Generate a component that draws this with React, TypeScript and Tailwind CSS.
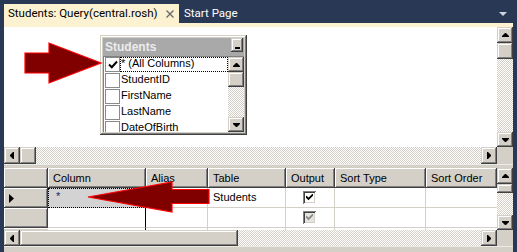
import React from "react";

const raised =
  "bg-[#d4d0c8] shadow-[inset_-1px_-1px_#404040,inset_1px_1px_#d4d0c8,inset_-2px_-2px_#808080,inset_2px_2px_#ffffff]";
const headRaised =
  "bg-[#d4d0c8] shadow-[inset_-1px_-1px_#404040,inset_1px_1px_#ffffff,inset_-2px_-2px_#808080]";
const checker =
  "bg-[image:repeating-conic-gradient(#d4d0c8_0%_25%,#ffffff_0%_50%)] bg-[length:2px_2px]";

type Dir = "up" | "down" | "left" | "right";

function Arrow({ dir }: { dir: Dir }) {
  if (dir === "up")
    return (
      <svg width="7" height="4" viewBox="0 0 7 4">
        <polygon points="3,0 4,0 7,3 7,4 0,4 0,3" fill="#000" />
      </svg>
    );
  if (dir === "down")
    return (
      <svg width="7" height="4" viewBox="0 0 7 4">
        <polygon points="0,0 7,0 7,1 4,4 3,4 0,1" fill="#000" />
      </svg>
    );
  if (dir === "right")
    return (
      <svg width="4" height="7" viewBox="0 0 4 7">
        <polygon points="0,0 1,0 4,3 4,4 1,7 0,7" fill="#000" />
      </svg>
    );
  return (
    <svg width="4" height="7" viewBox="0 0 4 7">
      <polygon points="3,0 4,0 4,7 3,7 0,4 0,3" fill="#000" />
    </svg>
  );
}

function Btn({ dir, cls }: { dir: Dir; cls: string }) {
  return (
    <div className={`${raised} flex items-center justify-center shrink-0 ${cls}`}>
      <Arrow dir={dir} />
    </div>
  );
}

function CheckMark({ color }: { color: string }) {
  return (
    <svg width="7" height="7" viewBox="0 0 7 7">
      <polyline
        points="0.5,3 2.5,5 6.5,1"
        fill="none"
        stroke={color}
        strokeWidth="1.8"
        strokeLinecap="square"
      />
    </svg>
  );
}

function GridCheck({ disabled }: { disabled?: boolean }) {
  return (
    <div
      className={`w-[13px] h-[13px] flex items-center justify-center shadow-[inset_1px_1px_#808080,inset_-1px_-1px_#ffffff,inset_2px_2px_#404040,inset_-2px_-2px_#d4d0c8] ${
        disabled ? "bg-[#e6e4df]" : "bg-white"
      }`}
    >
      <CheckMark color={disabled ? "#8a8a8a" : "#000"} />
    </div>
  );
}

function ListRow({ label, checked, focused }: { label: string; checked?: boolean; focused?: boolean }) {
  return (
    <div className="h-[16px] flex items-start shrink-0">
      <div className="ml-[1px] w-[15px] h-[15px] border border-[#8a8a8a] bg-white flex items-center justify-center shrink-0">
        {checked && (
          <svg width="10" height="9" viewBox="0 0 10 9">
            <polyline points="1,4.5 3.8,7.2 9,1.5" fill="none" stroke="#000" strokeWidth="2" />
          </svg>
        )}
      </div>
      <div
        className={`flex-1 h-[15px] pl-[1px] pt-[1px] leading-[11px] whitespace-nowrap ${
          focused ? "outline outline-1 outline-dotted outline-black -outline-offset-1" : ""
        }`}
      >
        {label}
      </div>
    </div>
  );
}

function StudentsBox() {
  return (
    <div
      className={`absolute left-[96px] top-[8px] w-[147px] h-[100px] p-[3px] flex flex-col ${raised}`}
    >
      <div className="h-[18px] shrink-0 bg-[#a9a9a9] flex items-start pl-[2px]">
        <span className="mt-[2px] font-bold text-[12px] text-[#ececec] leading-[14px]">Students</span>
        <div className={`ml-auto mr-[1px] mt-0 w-[12px] h-[14px] flex items-end justify-center pb-[3px] ${raised}`}>
          <div className="w-[5px] h-[2px] bg-black" />
        </div>
      </div>
      <div className="flex-1 flex bg-white border-t border-l border-[#808080] overflow-hidden">
        <div className="flex-1 flex flex-col">
          <ListRow label="* (All Columns)" checked focused />
          <ListRow label="StudentID" />
          <ListRow label="FirstName" />
          <ListRow label="LastName" />
          <ListRow label="DateOfBirth" />
        </div>
        <div className="w-[16px] flex flex-col shrink-0">
          <Btn dir="up" cls="h-[15px]" />
          <div className={`h-[15px] shrink-0 ${raised}`} />
          <div className={`flex-1 ${checker}`} />
          <Btn dir="down" cls="h-[15px]" />
        </div>
      </div>
    </div>
  );
}

const cols = [
  { w: "w-[98px]", label: "Column" },
  { w: "w-[62px]", label: "Alias" },
  { w: "w-[78px]", label: "Table" },
  { w: "w-[49px]", label: "Output" },
  { w: "w-[91px]", label: "Sort Type" },
  { w: "w-[71px]", label: "Sort Order" },
];

export default function App() {
  return (
    <div className="relative w-[517px] h-[252px] overflow-hidden bg-[#293955] flex flex-col font-['Liberation_Sans',Arial,sans-serif] text-[11px] text-black">
      {/* Tab strip */}
      <div className="h-[23px] shrink-0 flex items-end pl-[4px] pr-[10px]">
        <div className="h-[19px] w-[175px] shrink-0 bg-[#fcf2d2] flex items-center pl-[4px] font-['Roboto',sans-serif] text-[11.5px] text-black whitespace-nowrap">
          <span className="shrink-0">Students: Query(central.rosh)</span>
          <svg className="ml-[8px] mt-[1px] shrink-0" width="8" height="8" viewBox="0 0 8 8">
            <path d="M0.5 0.5 L7.5 7.5 M7.5 0.5 L0.5 7.5" stroke="#6b6b6b" strokeWidth="1.4" />
          </svg>
        </div>
        <div className="ml-[5px] h-[19px] flex items-center text-white font-['Roboto',sans-serif] text-[11.5px] whitespace-nowrap">
          Start Page
        </div>
        <svg className="ml-auto self-center mt-[5px]" width="8" height="4" viewBox="0 0 8 4">
          <polygon points="0,0 8,0 4,4" fill="#ced4e1" />
        </svg>
      </div>
      <div className="mx-[4px] h-[4px] shrink-0 bg-[#fcf2d2]" />

      <div className="mx-[4px] flex-1 flex flex-col bg-white">
        {/* Diagram pane */}
        <div className="h-[120px] shrink-0 flex">
          <div className="flex-1 relative bg-white">
            <StudentsBox />
          </div>
          <div className="w-[16px] flex flex-col shrink-0">
            <Btn dir="up" cls="h-[16px]" />
            <div className={`h-[16px] shrink-0 ${raised}`} />
            <div className={`flex-1 ${checker}`} />
            <Btn dir="down" cls="h-[15px]" />
          </div>
        </div>
        <div className="h-[17px] shrink-0 flex">
          <Btn dir="left" cls="w-[16px]" />
          <div className={`w-[16px] shrink-0 ${raised}`} />
          <div className={`flex-1 ${checker}`} />
          <Btn dir="right" cls="w-[16px]" />
          <div className="w-[16px] shrink-0 bg-[#d4d0c8]" />
        </div>

        {/* Splitter */}
        <div className="h-[4px] shrink-0 bg-[#d4d0c8] border-t border-[#ecebe6]" />

        {/* Criteria grid */}
        <div className="h-[62px] shrink-0 flex">
          <div className="flex-1 flex flex-col overflow-hidden">
            <div className="h-[20px] shrink-0 flex">
              <div className={`w-[44px] shrink-0 ${headRaised}`} />
              {cols.map((c) => (
                <div key={c.label} className={`${c.w} shrink-0 ${headRaised} flex items-center pl-[5px]`}>
                  {c.label}
                </div>
              ))}
            </div>
            {/* Row 1 */}
            <div className="h-[20px] shrink-0 flex">
              <div className={`w-[44px] shrink-0 ${headRaised} flex items-center pl-[5px]`}>
                <svg width="5" height="9" viewBox="0 0 5 9">
                  <polygon points="0,0 5,4.5 0,9" fill="#000" />
                </svg>
              </div>
              <div className="w-[98px] shrink-0 bg-[#d3d3d3] outline outline-1 outline-dotted outline-black -outline-offset-1 flex items-start pl-[8px] pt-[3px] text-[#1c1c5a] leading-[11px]">
                *
              </div>
              <div className="w-[62px] shrink-0 border-r border-b border-[#d4d0c8]" />
              <div className="w-[78px] shrink-0 border-r border-b border-[#d4d0c8] flex items-center pl-[5px]">
                Students
              </div>
              <div className="w-[49px] shrink-0 border-r border-b border-[#d4d0c8] flex items-center justify-center pr-[1px]">
                <GridCheck />
              </div>
              <div className="w-[91px] shrink-0 border-r border-b border-[#d4d0c8]" />
              <div className="w-[71px] shrink-0 border-b border-[#d4d0c8]" />
            </div>
            {/* Row 2 */}
            <div className="h-[20px] shrink-0 flex">
              <div className={`w-[44px] shrink-0 ${headRaised}`} />
              <div className="w-[98px] shrink-0 border-r border-b border-r-black border-b-[#d4d0c8]" />
              <div className="w-[62px] shrink-0 border-r border-b border-[#d4d0c8]" />
              <div className="w-[78px] shrink-0 border-r border-b border-[#d4d0c8]" />
              <div className="w-[49px] shrink-0 border-r border-b border-[#d4d0c8] flex items-center justify-center pr-[1px]">
                <GridCheck disabled />
              </div>
              <div className="w-[91px] shrink-0 border-r border-b border-[#d4d0c8]" />
              <div className="w-[71px] shrink-0 border-b border-[#d4d0c8]" />
            </div>
            {/* Row 3 (partial) */}
            <div className="h-[2px] shrink-0 flex">
              <div className="w-[44px] shrink-0 bg-[#d4d0c8] border-t border-white" />
              <div className="w-[98px] shrink-0 border-r border-black" />
              <div className="w-[62px] shrink-0 border-r border-[#d4d0c8]" />
              <div className="w-[78px] shrink-0 border-r border-[#d4d0c8]" />
              <div className="w-[49px] shrink-0 border-r border-[#d4d0c8]" />
              <div className="w-[91px] shrink-0 border-r border-[#d4d0c8]" />
              <div className="w-[71px] shrink-0" />
            </div>
          </div>
          <div className="w-[16px] flex flex-col shrink-0">
            <Btn dir="up" cls="h-[16px]" />
            <div className={`h-[9px] shrink-0 ${raised}`} />
            <div className={`flex-1 ${checker}`} />
            <Btn dir="down" cls="h-[15px]" />
          </div>
        </div>
        <div className="h-[16px] shrink-0 flex">
          <Btn dir="left" cls="w-[16px]" />
          <div className={`w-[218px] shrink-0 ${raised}`} />
          <div className={`flex-1 ${checker}`} />
          <Btn dir="right" cls="w-[16px]" />
          <div className="w-[16px] shrink-0 bg-[#d4d0c8]" />
        </div>
        <div className="flex-1 bg-[#d4d0c8] border-t border-[#ecebe6]" />
      </div>

      {/* Annotation arrows */}
      <svg className="absolute left-0 top-0 pointer-events-none" width="517" height="252" viewBox="0 0 517 252">
        <polygon
          points="25,53 49,53 49,43 101,63 49,83 49,73 25,73"
          fill="#800000"
          stroke="#ff0000"
          strokeWidth="1.2"
        />
        <polygon
          points="88,197 172,182 172,189.5 209,189.5 209,203.5 172,203.5 172,212"
          fill="#800000"
          stroke="#ff0000"
          strokeWidth="1.2"
        />
      </svg>
    </div>
  );
}
